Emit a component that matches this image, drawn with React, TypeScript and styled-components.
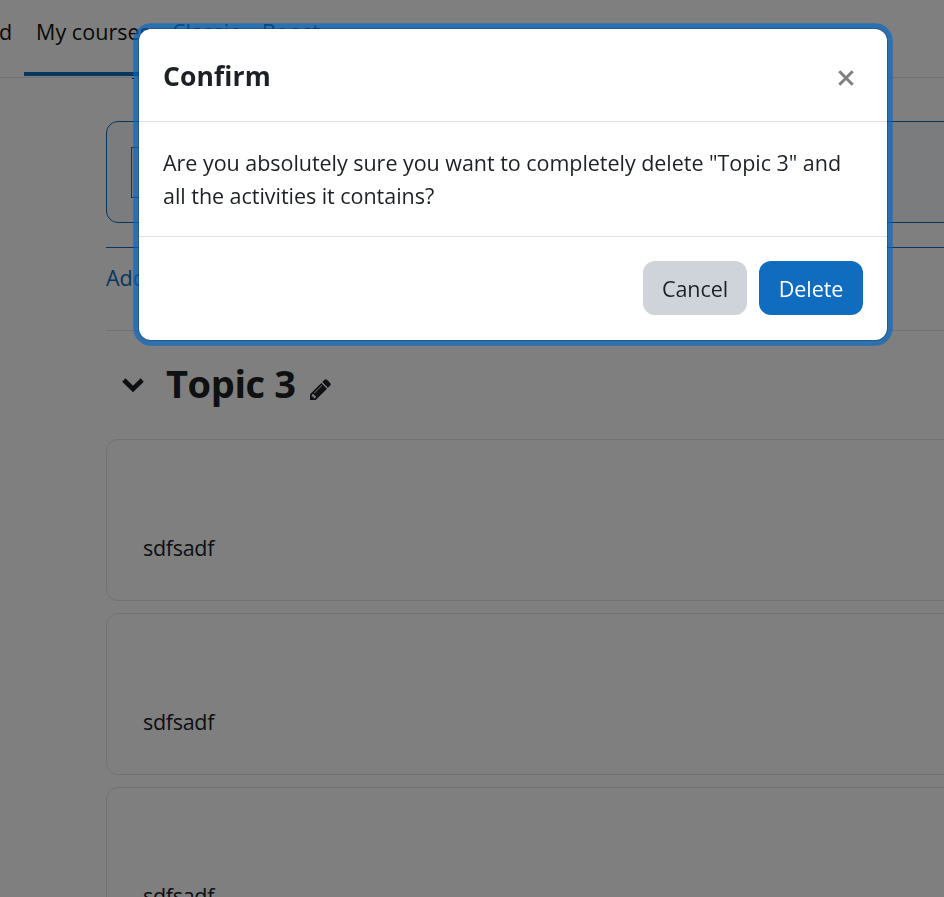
import React from 'react';

import styled, { createGlobalStyle, css } from "styled-components";


const GlobalStyle = createGlobalStyle`
  * {
    box-sizing: border-box;
  }
  body {
    margin: 0;
    height: 897px;
    overflow: hidden;
    background: #fff;
    color: #1d2125;
    font-family: "Open Sans", "Noto Sans", sans-serif;
    font-size: 21.5px;
    line-height: 33px;
  }
`;

const Page = styled.div`
  height: 897px;
  overflow: hidden;
`;

const Nav = styled.nav`
  display: flex;
  height: 78px;
  border-bottom: 1px solid #dee2e6;
`;

const NavItem = styled.a<{ $width: number; $active?: boolean }>`
  position: relative;
  flex: none;
  width: ${(p) => p.$width}px;
  height: 76px;
  padding: 15px 0 0 12px;
  white-space: nowrap;
  letter-spacing: 0.05px;
  color: #111;
  border-bottom: 4px solid ${(p) => (p.$active ? "#0f6cbf" : "transparent")};

  ${(p) =>
    p.$active &&
    css`
      &::after {
        content: "";
        position: absolute;
        left: 108px;
        top: 78px;
        width: 2px;
        height: 1px;
        background: #1d2125;
      }
    `}
`;

const HomeItem = styled(NavItem)`
  padding-left: 0;
  text-indent: -1px;
`;

const Main = styled.main`
  width: 1100px;
  padding: 43px 0 0 106px;
`;

const Selected = styled.div`
  height: 102px;
  padding: 25px 24px;
  border: 1px solid #0f6cbf;
  border-radius: 12px;
  background: #f5f9fc;
`;

const IconBox = styled.div`
  width: 52px;
  height: 51px;
  border: 1px solid #0f6cbf;
`;

const AddRow = styled.div`
  height: 84px;
  margin-top: 24px;
  padding-top: 13px;
  border-top: 1px solid #0f6cbf;
  border-bottom: 1px solid #dee2e6;
  color: #0f6cbf;
`;

const SectionHead = styled.div`
  display: flex;
  align-items: center;
  height: 108px;
  padding-left: 15px;
`;

const SectionTitle = styled.h3`
  margin: 0 14px 5px 21px;
  font-size: 38px;
  font-weight: 700;
  line-height: 46px;
  letter-spacing: -0.4px;
`;

const Card = styled.div`
  height: 162px;
  margin-bottom: 12px;
  padding: 91px 36px 0;
  border: 1px solid #dee2e6;
  border-radius: 12px;
  letter-spacing: -0.3px;
`;

const Backdrop = styled.div`
  position: fixed;
  inset: 0;
  padding: 28px 56px 0 138px;
  background: rgba(0, 0, 0, 0.5);
`;

const Dialog = styled.div`
  width: 750px;
  border: 1px solid rgba(0, 0, 0, 0.2);
  border-radius: 13px;
  background: #fff;
  background-clip: padding-box;
  box-shadow: 0 0 0 4.8px rgba(2, 105, 202, 0.66);
`;

const DialogHeader = styled.div`
  display: flex;
  align-items: center;
  justify-content: space-between;
  height: 93px;
  padding: 2px 33px 0 24px;
  border-bottom: 1px solid #dee2e6;
`;

const DialogTitle = styled.h5`
  margin: 0;
  font-size: 26.5px;
  font-weight: 700;
  letter-spacing: 0.1px;
`;

const DialogBody = styled.div`
  height: 115px;
  padding: 24px;
  border-bottom: 1px solid #dee2e6;
  letter-spacing: -0.035px;
`;

const Line = styled.div`
  white-space: nowrap;
`;

const DialogFooter = styled.div`
  display: flex;
  justify-content: flex-end;
  gap: 12px;
  height: 103px;
  padding: 24px;
`;

const Button = styled.button<{ $primary?: boolean }>`
  width: 104px;
  height: 54px;
  padding: 0;
  border: none;
  border-radius: 12px;
  background: #ced4da;
  color: #1d2125;
  font: inherit;
  letter-spacing: -0.05px;
  ${(p) =>
    p.$primary &&
    css`
      background: #0f6cbf;
      color: #fff;
    `}
`;

const activities = ["sdfsadf", "sdfsadf", "sdfsadf"];

const Chevron = styled.svg`
  flex: none;
  margin-bottom: 1px;
`;

const Pencil = styled.svg`
  flex: none;
  margin-top: 9px;
`;

const Close = styled.svg`
  flex: none;
  margin-top: 3px;
`;

function ChevronIcon() {
  return (
    <Chevron width="24" height="16" viewBox="0 0 24 16">
      <path d="M2.8 3 L12 12 L21.2 3" fill="none" stroke="#1d2125" strokeWidth="4.6" />
    </Chevron>
  );
}

function PencilIcon() {
  return (
    <Pencil width="21" height="21" viewBox="0 0 1536 1536">
      <path
        fill="#1d2125"
        d="M363 1408l91-91-235-235-91 91v107h128v128h107zM886 480q0-22-22-22-10 0-17 7L305 1007q-7 7-7 17 0 22 22 22 10 0 17-7l542-542q7-7 7-17zM832 288l416 416-832 832H0v-416L832 288zM1515 384q0 53-37 90l-166 166-416-416 166-165q36-38 90-38 53 0 91 38l235 234q37 39 37 91z"
      />
    </Pencil>
  );
}

function CloseIcon() {
  return (
    <Close width="16" height="16" viewBox="0 0 16 16">
      <path d="M1.3 1.3 L14.7 14.7 M14.7 1.3 L1.3 14.7" stroke="#808080" strokeWidth="3" />
    </Close>
  );
}

function ConfirmDialog() {
  return (
    <Backdrop>
      <Dialog role="dialog">
        <DialogHeader>
          <DialogTitle>Confirm</DialogTitle>
          <CloseIcon />
        </DialogHeader>
        <DialogBody>
          <Line>Are you absolutely sure you want to completely delete "Topic 3" and</Line>
          <Line>all the activities it contains?</Line>
        </DialogBody>
        <DialogFooter>
          <Button>Cancel</Button>
          <Button $primary>Delete</Button>
        </DialogFooter>
      </Dialog>
    </Backdrop>
  );
}

export default function App() {
  return (
    <>
      <GlobalStyle />
      <Page>
        <Nav>
          <HomeItem $width={24}>d</HomeItem>
          <NavItem $width={136} $active>My courses</NavItem>
          <NavItem $width={90}>Classic</NavItem>
          <NavItem $width={90}>Boost</NavItem>
        </Nav>
        <Main>
          <Selected>
            <IconBox />
          </Selected>
          <AddRow>Add</AddRow>
          <SectionHead>
            <ChevronIcon />
            <SectionTitle>Topic 3</SectionTitle>
            <PencilIcon />
          </SectionHead>
          {activities.map((name, i) => (
            <Card key={i}>{name}</Card>
          ))}
        </Main>
      </Page>
      <ConfirmDialog />
    </>
  );
}
